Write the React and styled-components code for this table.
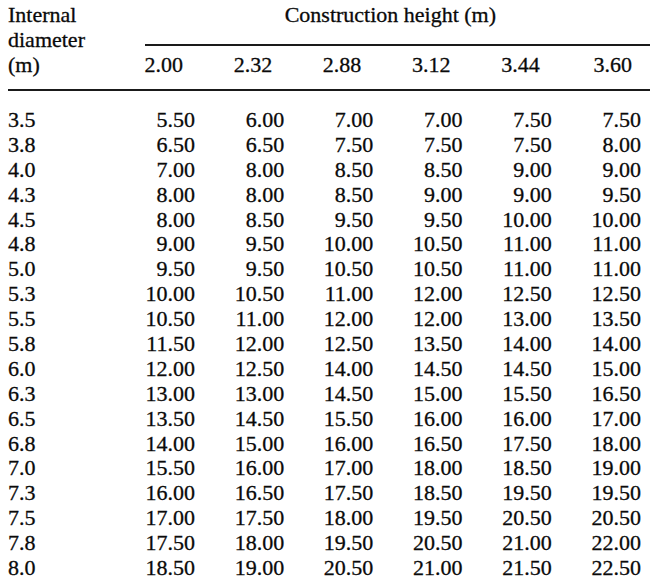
import React from 'react';
import styled, { createGlobalStyle } from 'styled-components';

const GlobalStyle = createGlobalStyle`
  html, body {
    margin: 0;
    padding: 0;
    background: #fff;
  }
  body {
    font-family: "Liberation Serif", "Times New Roman", serif;
    color: #0a0a0a;
  }
`;

const COLS = '106.8px repeat(6, 89.2px)';

const heights = ['2.00', '2.32', '2.88', '3.12', '3.44', '3.60'];

const rows = [
  ['3.5', '5.50', '6.00', '7.00', '7.00', '7.50', '7.50'],
  ['3.8', '6.50', '6.50', '7.50', '7.50', '7.50', '8.00'],
  ['4.0', '7.00', '8.00', '8.50', '8.50', '9.00', '9.00'],
  ['4.3', '8.00', '8.00', '8.50', '9.00', '9.00', '9.50'],
  ['4.5', '8.00', '8.50', '9.50', '9.50', '10.00', '10.00'],
  ['4.8', '9.00', '9.50', '10.00', '10.50', '11.00', '11.00'],
  ['5.0', '9.50', '9.50', '10.50', '10.50', '11.00', '11.00'],
  ['5.3', '10.00', '10.50', '11.00', '12.00', '12.50', '12.50'],
  ['5.5', '10.50', '11.00', '12.00', '12.00', '13.00', '13.50'],
  ['5.8', '11.50', '12.00', '12.50', '13.50', '14.00', '14.00'],
  ['6.0', '12.00', '12.50', '14.00', '14.50', '14.50', '15.00'],
  ['6.3', '13.00', '13.00', '14.50', '15.00', '15.50', '16.50'],
  ['6.5', '13.50', '14.50', '15.50', '16.00', '16.00', '17.00'],
  ['6.8', '14.00', '15.00', '16.00', '16.50', '17.50', '18.00'],
  ['7.0', '15.50', '16.00', '17.00', '18.00', '18.50', '19.00'],
  ['7.3', '16.00', '16.50', '17.50', '18.50', '19.50', '19.50'],
  ['7.5', '17.00', '17.50', '18.00', '19.50', '20.50', '20.50'],
  ['7.8', '17.50', '18.00', '19.50', '20.50', '21.00', '22.00'],
  ['8.0', '18.50', '19.00', '20.50', '21.00', '21.50', '22.50'],
];

const Table = styled.div`
  width: 642px;
  margin-left: 8px;
  padding-top: 2px;
  font-size: 22px;
  -webkit-text-stroke: 0.3px #0a0a0a;
`;

const Head = styled.div`
  display: grid;
  grid-template-columns: ${COLS};
  border-bottom: 2px solid #1a1a1a;
  padding-bottom: 12px;
`;

const RowLabel = styled.div`
  grid-row: 1 / span 2;
  line-height: 25px;
`;

const Title = styled.div`
  grid-column: 2 / span 6;
  margin-left: 30px;
  padding-right: 14px;
  padding-bottom: 10px;
  border-bottom: 2px solid #1a1a1a;
  text-align: center;
  line-height: 25px;
`;

const HeightCell = styled.div`
  grid-row: 2;
  align-self: end;
  text-align: right;
  padding-right: ${p => p.pad}px;
  line-height: 25px;
`;

const Body = styled.div`
  display: grid;
  grid-template-columns: ${COLS};
  grid-auto-rows: 24.9px;
  padding-top: 17px;
`;

const Cell = styled.div`
  line-height: 24.9px;
  text-align: ${p => (p.first ? 'left' : 'right')};
  padding-right: ${p => (p.first ? 0 : 9)}px;
  white-space: nowrap;
`;

export default function App() {
  return (
    <>
      <GlobalStyle />
      <Table>
        <Head>
          <RowLabel>
            Internal
            <br />
            diameter
            <br />
            (m)
          </RowLabel>
          <Title>Construction height (m)</Title>
          {heights.map((h, i) => (
            <HeightCell key={h} pad={i === 5 ? 18 : 21}>
              {h}
            </HeightCell>
          ))}
        </Head>
        <Body>
          {rows.map(r =>
            r.map((v, i) => (
              <Cell key={r[0] + '-' + i} first={i === 0}>
                {v}
              </Cell>
            ))
          )}
        </Body>
      </Table>
    </>
  );
}
